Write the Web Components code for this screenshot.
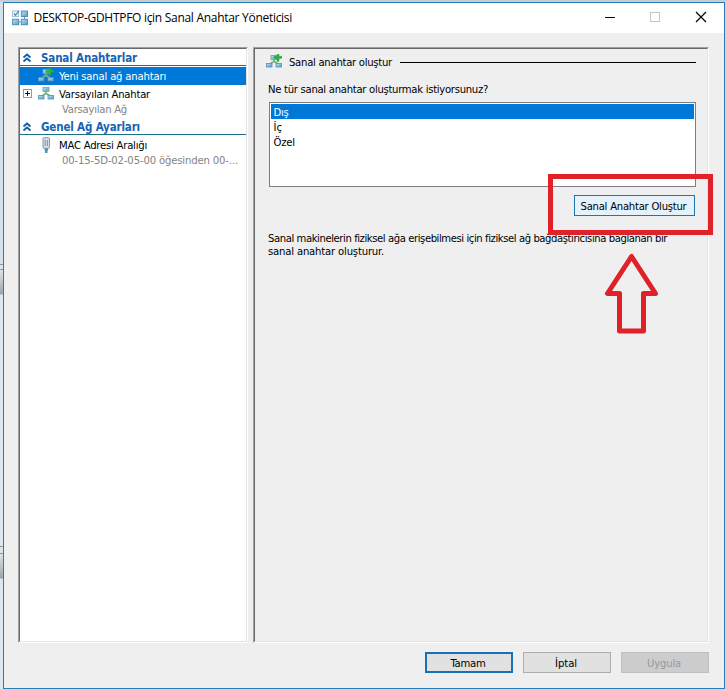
<!DOCTYPE html>
<html lang="tr">
<head>
<meta charset="utf-8">
<title>Sanal Anahtar Yöneticisi</title>
<style>
html,body{margin:0;height:100%;overflow:hidden;background:#d3d6da}
</style>
</head>
<body>
<switch-manager></switch-manager>
<script>
const define=(name,html,init)=>customElements.define(name,class extends HTMLElement{
  constructor(){super();this.attachShadow({mode:'open'}).innerHTML=html;}
  connectedCallback(){if(init)init.call(this,this.shadowRoot);}
});

/* Single line label whose tracking is adjusted to fill the width given in "w". */
define('fit-label',`<style>:host{display:block;white-space:pre;flex:none;line-height:15px;height:15px}span{display:inline-block}</style><span><slot></slot></span>`,function(root){
  const w=+this.getAttribute('w'),s=root.querySelector('span');
  const n=root.querySelector('slot').assignedNodes({flatten:true}).reduce((t,x)=>t+x.textContent.length,0);
  this.style.width=w+'px';
  if(n)s.style.letterSpacing=((w-s.getBoundingClientRect().width)/n)+'px';
});

const defs=`<defs><linearGradient id="g" x1="0" y1="0" x2="1" y2="1"><stop offset="0" stop-color="#b9e3f7"/><stop offset="1" stop-color="#4f9bcb"/></linearGradient></defs>`;
const net=`<path d="M8 5.500v2.500M3.500 10.500 6.500 8H9.500L12.500 10.500" fill="none" stroke="#74b382" stroke-width="1.700"/><rect x="5" y="1.500" width="6" height="4" fill="url(#g)" stroke="#6f9fbd" stroke-width=".8"/><rect x=".5" y="9.500" width="5.500" height="3.500" fill="url(#g)" stroke="#5c8fb0" stroke-width=".8"/><rect x="10" y="9.500" width="5.500" height="3.500" fill="url(#g)" stroke="#5c8fb0" stroke-width=".8"/>`;
const icons={
  net,
  add:net+`<path d="M11 0h2v2h3v2h-3v3h-2V4H8V2h3z" transform="translate(0 .3)" fill="#2db53c" stroke="#22a032" stroke-width=".5"/>`,
  mac:`<rect x="5" y=".7" width="6.500" height="10.600" rx="1" fill="#d9dde7" stroke="#8d95a8"/><path d="M7.200 3v6M9.400 3v6" stroke="#7d87a0" stroke-width=".9"/><path d="M6.500 11.500h3.600v2H9.500V16H7v-2.500h-.5z" fill="#4796b4"/>`,
  app:`<g fill="url(#g)" stroke="#427fac" stroke-width=".8"><rect x="9.300" y="1" width="6.200" height="5.600"/><rect x=".6" y="9.200" width="6.200" height="5.600"/><rect x="9.300" y="9.200" width="6.200" height="5.600"/></g><rect x=".6" y="1" width="6" height="5.600" fill="#eef5fa" stroke="#90b4cb" stroke-width=".8"/><path d="M2 3.500 3.500 5.300 7 .6" fill="none" stroke="#4b80ab" stroke-width="1.200"/><path d="M7 12h2.500M12.500 7v2" stroke="#6b9ab8"/>`,
  chev:`<path d="M4.500 7.500 8 4.500l3.500 3M4.500 11.500 8 8.500l3.500 3" fill="none" stroke="#0f5ea8" stroke-width="1.800"/>`,
  plus:`<rect x="3.500" y="3.500" width="8" height="8" fill="#fff" stroke="#999"/><path d="M5 7.500h5M7.500 5v5" stroke="#111"/>`
};
define('ui-icon',`<style>:host{display:block;width:16px;height:16px;flex:none}svg{display:block}</style><svg width="16" height="16" viewBox="0 0 16 16"></svg>`,function(root){
  root.querySelector('svg').innerHTML=defs+(icons[this.getAttribute('name')]||'');
});

define('title-bar',`<style>
:host{display:flex;height:30px;background:#fff;align-items:center;padding-left:8px;font:12px "Open Sans","Noto Sans",sans-serif;color:#000}
fit-label{margin-left:5.500px;margin-top:-1px}
svg{display:block;margin-left:auto;flex:none}</style>
<ui-icon name="app"></ui-icon><fit-label w="258.500"><slot></slot></fit-label>
<svg width="121" height="30"><path d="M2 14.500h10" stroke="#000"/><rect x="47.500" y="9.500" width="9" height="9" fill="none" stroke="#c6c6c6"/><path d="M93 9l10 10M103 9l-10 10" stroke="#000" stroke-width="1.200"/></svg>`);

define('sunken-panel',`<style>:host{display:block;box-sizing:border-box;border:1px solid;border-color:#a0a0a0 #fff #fff #a0a0a0}
div{height:100%;box-sizing:border-box;border:1px solid;border-color:#696969 #e3e3e3 #e3e3e3 #696969}</style><div><slot></slot></div>`);

define('tree-head',`<style>:host{display:flex;box-sizing:border-box;height:17px;border-bottom:1px solid #1b7088;align-items:center;color:#1763b3;font-weight:bold;font-size:11.500px;margin-bottom:1px}
ui-icon{margin-left:-1px;margin-right:6px;margin-top:1px}::slotted(*){margin-top:2px}</style><ui-icon name="chev"></ui-icon><slot></slot>`);

define('tree-row',`<style>:host{display:flex;height:18px;align-items:center;box-sizing:border-box}
:host([selected]){background:#0078d7;color:#fff}
ui-icon+ui-icon{margin-left:2px;margin-right:5px}</style><ui-icon class="e"></ui-icon><ui-icon class="i"></ui-icon><slot></slot>`,function(root){
  root.querySelector('.e').setAttribute('name',this.hasAttribute('expandable')?'plus':'none');
  root.querySelector('.i').setAttribute('name',this.getAttribute('icon'));
  root.querySelectorAll('ui-icon').forEach(i=>i.connectedCallback());
});
define('tree-note',`<style>:host{display:flex;height:15px;align-items:center;padding-left:42px;margin-top:-1px;margin-bottom:1px;color:#838383}</style><slot></slot>`);

define('list-box',`<style>:host{display:block;box-sizing:border-box;width:427px;height:85px;border:1px solid #7a7f87;background:#fff;padding:1px}</style><slot></slot>`);
define('list-item',`<style>:host{display:flex;height:15px;padding-left:2.500px;align-items:center}:host([selected]){background:#0078d7;color:#fff}::slotted(*){margin-top:1px}</style><slot></slot>`);

define('push-button',`<style>:host{display:flex;box-sizing:border-box;width:88px;height:21px;align-items:center;justify-content:center;background:#e1e1e1;border:1px solid #adadad;flex:none}
:host([default]){border:2px solid #1473b5}
:host([hot]){width:121px;background:#e5f1fb;border-color:#1b77ae}
:host([disabled]){background:#ccc;border-color:#bfbfbf;color:#989898}::slotted(*){margin-top:1px;margin-right:2px}</style><slot></slot>`);

define('callout-marks',`<style>:host{position:absolute;left:0;top:0;pointer-events:none}svg{display:block}</style>
<svg width="725" height="689" fill="none" stroke="#e02128" stroke-width="5"><rect x="550.500" y="176.500" width="160" height="56"/><path d="M631.500 256.500 607.500 293.500H619.500V331H643.500V293.500H655.500Z" stroke-linejoin="round"/></svg>`);

define('switch-manager',`<style>
:host{display:block;position:relative;width:725px;height:689px;box-sizing:border-box;padding:2px 0 0 3px;font:11.200px "DejaVu Sans Condensed","DejaVu Sans",sans-serif;font-stretch:condensed;color:#000;background:linear-gradient(#c9cdd2 0 2px,#d6e2eb 2px 264px,#8b959c 264px 265px,#e1e4e6 265px 269px,#8b959c 269px 270px,#dfe2e3 270px,#9da5aa 294px,#dce7ee 295px 546px,#8b959c 546px 547px,#e1e4e6 547px 553px,#8b959c 553px 554px,#dfe2e3 554px,#9da5aa 578px,#dce7ee 579px)}
.win{box-sizing:border-box;width:722px;height:687px;border:1px solid #1f80bb;background:#efefef;display:flex;flex-direction:column}
.body{display:flex;gap:5px;padding:14px 0 0 14px;height:596px}
.left{width:230px;background:#fff}
.right{width:456px}
.pane{padding:5px 0 0 11px}
.h{display:flex;align-items:center}
.h i{height:1px;width:296px;background:#000;margin-left:8px}
.h fit-label{margin-left:7px}
.q{margin:12px 0 5px 2px}
list-box{margin-left:3px}
.act{display:flex;margin:8px 0 16px 308px}
.d{margin-left:2px;height:13px;line-height:13px}
.foot{display:flex;gap:10px;justify-content:flex-end;padding:9px 15px 0 0}
</style>
<div class="win">
<title-bar>DESKTOP-GDHTPFO için Sanal Anahtar Yöneticisi</title-bar>
<div class="body">
<sunken-panel class="left">
<tree-head><fit-label w="96">Sanal Anahtarlar</fit-label></tree-head>
<tree-row selected icon="add"><fit-label w="107">Yeni sanal ağ anahtarı</fit-label></tree-row>
<tree-row expandable icon="net"><fit-label w="91">Varsayılan Anahtar</fit-label></tree-row>
<tree-note><fit-label w="65">Varsayılan Ağ</fit-label></tree-note>
<tree-head><fit-label w="99">Genel Ağ Ayarları</fit-label></tree-head>
<tree-row icon="mac"><fit-label w="88">MAC Adresi Aralığı</fit-label></tree-row>
<tree-note><fit-label w="176">00-15-5D-02-05-00 öğesinden 00-...</fit-label></tree-note>
</sunken-panel>
<sunken-panel class="right"><div class="pane">
<div class="h"><ui-icon name="add"></ui-icon><fit-label w="103">Sanal anahtar oluştur</fit-label><i></i></div>
<fit-label class="q" w="220">Ne tür sanal anahtar oluşturmak istiyorsunuz?</fit-label>
<list-box>
<list-item selected><fit-label w="15">Dış</fit-label></list-item>
<list-item><fit-label w="8.800">İç</fit-label></list-item>
<list-item><fit-label w="21.500">Özel</fit-label></list-item>
</list-box>
<div class="act"><push-button hot><fit-label w="106">Sanal Anahtar Oluştur</fit-label></push-button></div>
<fit-label class="d" w="399">Sanal makinelerin fiziksel ağa erişebilmesi için fiziksel ağ bağdaştırıcısına bağlanan bir</fit-label>
<fit-label class="d" w="116">sanal anahtar oluşturur.</fit-label>
</div></sunken-panel>
</div>
<div class="foot"><push-button default><fit-label w="35">Tamam</fit-label></push-button><push-button><fit-label w="22">İptal</fit-label></push-button><push-button disabled><fit-label w="34">Uygula</fit-label></push-button></div>
</div>
<callout-marks></callout-marks>`);
</script>
</body>
</html>
